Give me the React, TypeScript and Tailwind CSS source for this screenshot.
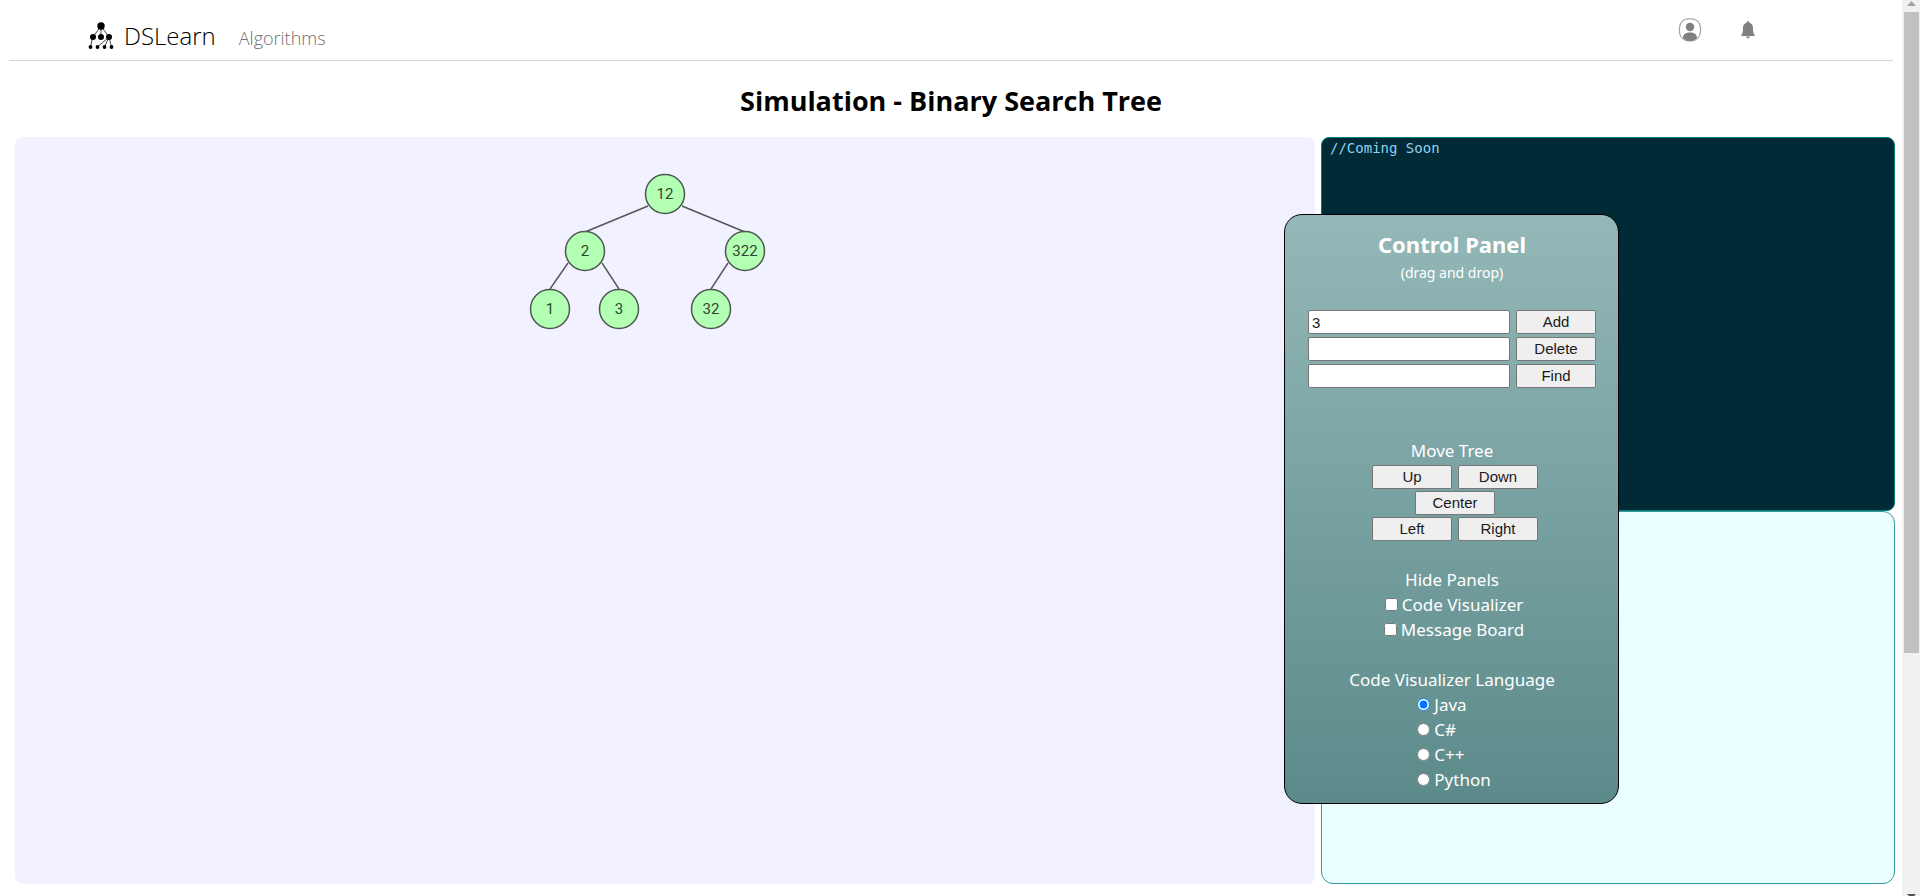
import { useState } from "react";

type TreeNode = { value: number; x: number; y: number };

const NODES: TreeNode[] = [
  { value: 12, x: 135, y: 24 },
  { value: 2, x: 55, y: 81 },
  { value: 322, x: 215, y: 81 },
  { value: 1, x: 20, y: 139 },
  { value: 3, x: 89, y: 139 },
  { value: 32, x: 181, y: 139 },
];

const EDGES = [
  [118, 36, 55, 62],
  [152, 36, 215, 62],
  [38, 93, 20, 119],
  [72, 93, 89, 119],
  [198, 93, 181, 119],
];

const LANGUAGES = ["Java", "C#", "C++", "Python"];

const buttonStyle =
  "h-6 w-20 rounded-[2px] border border-[#767676] bg-[#efefef] text-[15px] leading-[22px] text-[#1a1a1a] font-['Liberation_Sans',Arial,sans-serif]";

function Logo() {
  return (
    <svg viewBox="0 0 26 28" className="h-7 w-[26px]" aria-hidden="true">
      <path
        d="M13 4 5 15M13 4v11M13 4l8 11M4.500 16 2.500 25M21 15 9.500 25M21 15l-4.500 10M21 15l2.500 10"
        fill="none"
        stroke="#444"
        strokeWidth="1"
      />
      <circle cx="13" cy="4" r="3.700" />
      <circle cx="5" cy="15" r="3" />
      <circle cx="13" cy="15" r="3" />
      <circle cx="21" cy="15" r="3" />
      <circle cx="2.500" cy="25" r="1.900" />
      <circle cx="9.500" cy="25" r="1.900" />
      <circle cx="16.500" cy="25" r="1.900" />
      <circle cx="23.500" cy="25" r="1.900" />
    </svg>
  );
}

function Header() {
  return (
    <header className="mx-[9px] flex h-[61px] items-start justify-between border-b border-[#d5d5d5] pr-[138px] pl-[79px]">
      <nav className="flex items-center pt-[18px]">
        <a href="#home" className="flex items-center gap-[10px] text-[24px] leading-9 font-light text-black">
          <Logo />
          DSLearn
        </a>
        <a href="#algorithms" className="pt-1 pl-[23px] text-[18px] leading-8 font-light text-[#707070]">
          Algorithms
        </a>
      </nav>
      <div className="flex items-center gap-[39px] pt-[18px]">
        <button aria-label="Account">
          <svg viewBox="0 0 24 24" className="h-6 w-6">
            <rect x="1.500" y="0.800" width="21" height="22" rx="9" fill="#fff" stroke="#a3a3a3" strokeWidth="1.200" />
            <circle cx="12" cy="9" r="4.200" fill="#808080" />
            <path d="M5 20c0-4 3-5.500 7-5.500s7 1.500 7 5.500c-2 2-4.500 3-7 3s-5-1-7-3z" fill="#808080" />
          </svg>
        </button>
        <button aria-label="Notifications">
          <svg viewBox="0 0 14 18" className="h-[18px] w-3.5" fill="#808080">
            <path d="M5.600 1.700Q5.600.300 7 .300t1.400 1.400C11 2.300 12 4.500 12 7c0 4 .4 5.500 1.600 6.800V15H.4v-1.200C1.600 12.500 2 11 2 7c0-2.500 1-4.700 3.600-5.300zM5 15.500h4Q8.500 17.500 7 17.500T5 15.500z" />
          </svg>
        </button>
      </div>
    </header>
  );
}

function TreeCanvas() {
  return (
    <section aria-label="Tree" className="flex flex-[1300_1_0%] justify-center rounded-lg bg-[#f1f1ff] pt-[33px]">
      <svg viewBox="-1 0 238 164" className="mr-[34px] h-[164px] w-[238px]">
        {EDGES.map(([x1, y1, x2, y2], i) => (
          <line key={i} x1={x1} y1={y1} x2={x2} y2={y2} stroke="#555" strokeWidth="1.400" />
        ))}
        {NODES.map((n) => (
          <g key={n.value}>
            <circle cx={n.x} cy={n.y} r="19.500" fill="#b3ffb3" stroke="#4a5a4e" strokeWidth="1.500" />
            <text
              x={n.x}
              y={n.y + 5}
              textAnchor="middle"
              className="fill-[#2d472d] font-[Roboto,'Liberation_Sans',sans-serif] text-[15px]"
            >
              {n.value}
            </text>
          </g>
        ))}
      </svg>
    </section>
  );
}

function ValueRow({ label, initial }: { label: string; initial: string }) {
  const [value, setValue] = useState(initial);
  return (
    <div className="flex gap-[6px]">
      <input
        aria-label={`${label} value`}
        value={value}
        onChange={(e) => setValue(e.target.value)}
        className="h-6 min-w-0 flex-1 rounded-[2px] border border-[#767676] bg-white px-[3px] font-['Liberation_Sans',Arial,sans-serif] text-[15px] text-[#1a1a1a]"
      />
      <button className={buttonStyle}>{label}</button>
    </div>
  );
}

function ControlPanel() {
  const [language, setLanguage] = useState("Java");
  return (
    <aside className="absolute top-[214px] right-[283px] w-[335px] cursor-move rounded-[18px] border border-black bg-linear-to-b from-[#94b8b8] to-[#5c8a8a] pt-3 pr-[22px] pb-[11px] pl-[23px] text-center font-['Noto_Sans',sans-serif] text-[17px] leading-[25px] text-white">
      <h2 className="text-[22px] leading-[34px] font-bold">Control Panel</h2>
      <p className="text-[14px] leading-6">(drag and drop)</p>
      <div className="mt-[25px] flex flex-col gap-[3px]">
        <ValueRow label="Add" initial="3" />
        <ValueRow label="Delete" initial="" />
        <ValueRow label="Find" initial="" />
      </div>

      <h3 className="mt-[50px]">Move Tree</h3>
      <div className="mt-[2px] flex flex-col items-center gap-[2px] pl-[6px]">
        <div className="flex gap-[6px]">
          <button className={buttonStyle}>Up</button>
          <button className={buttonStyle}>Down</button>
        </div>
        <button className={buttonStyle}>Center</button>
        <div className="flex gap-[6px]">
          <button className={buttonStyle}>Left</button>
          <button className={buttonStyle}>Right</button>
        </div>
      </div>

      <fieldset className="mt-[26px]">
        <legend className="w-full">Hide Panels</legend>
        <div className="flex flex-col items-center pl-1">
          {["Code Visualizer", "Message Board"].map((name) => (
            <label key={name} className="flex items-center gap-1">
              <input type="checkbox" className="h-[13px] w-[13px]" />
              {name}
            </label>
          ))}
        </div>
      </fieldset>

      <fieldset className="mt-[25px]">
        <legend className="w-full">Code Visualizer Language</legend>
        <div className="flex justify-center pl-1">
          <div className="flex flex-col items-start">
            {LANGUAGES.map((name) => (
              <label key={name} className="flex items-center gap-1">
                <input
                  type="radio"
                  name="language"
                  checked={language === name}
                  onChange={() => setLanguage(name)}
                  className="h-[13px] w-[13px]"
                />
                {name}
              </label>
            ))}
          </div>
        </div>
      </fieldset>
    </aside>
  );
}

function ScrollTrack() {
  return (
    <div aria-hidden="true" className="flex w-[18px] flex-col overflow-hidden bg-[#f1f1f1] pr-px pl-[2px]">
      <svg viewBox="0 0 15 12" className="h-3 w-[15px] shrink-0">
        <path d="M3 6h9L7.500 1z" fill="#a3a3a3" />
      </svg>
      <div className="h-[641px] shrink-0 bg-[#c1c1c1]" />
      <div className="flex-1" />
      <svg viewBox="0 0 15 2" className="h-0.5 w-[15px] shrink-0">
        <path d="M3 0h9l-2 2H5z" fill="#505050" />
      </svg>
    </div>
  );
}

export default function App() {
  return (
    <div className="flex h-screen bg-white font-['Open_Sans','Noto_Sans',sans-serif]">
      <div className="relative flex min-w-0 flex-1 flex-col">
        <Header />
        <h1 className="pt-[22px] pb-[18px] text-center text-[27px] leading-9 font-bold text-black">
          Simulation - Binary Search Tree
        </h1>
        <main className="flex flex-1 gap-[6px] pr-[7px] pb-3 pl-[15px]">
          <TreeCanvas />
          <div className="flex flex-[574_1_0%] flex-col">
            <pre className="flex-1 rounded-lg border border-[#008080] bg-[#002b36] px-2 font-['DejaVu_Sans_Mono',monospace] text-[14px] leading-[20px] text-[#93d0f0]">
              //Coming Soon
            </pre>
            <section aria-label="Message board" className="flex-1 rounded-xl border border-[#389797] bg-[#eaffff]" />
          </div>
        </main>
        <ControlPanel />
      </div>
      <ScrollTrack />
    </div>
  );
}
